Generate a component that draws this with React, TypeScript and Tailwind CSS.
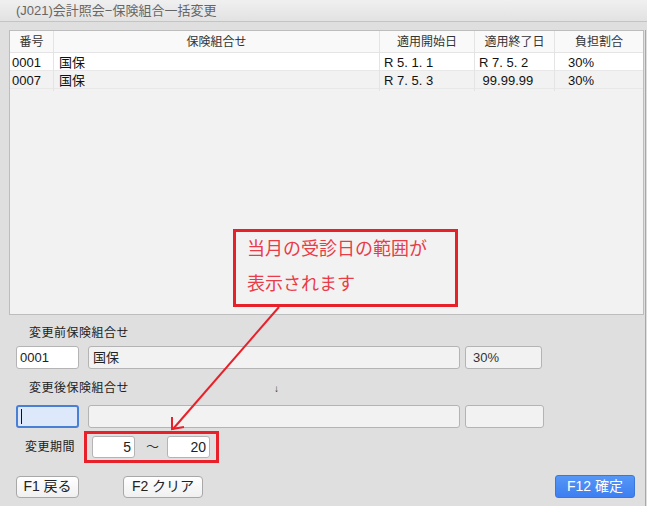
import React from "react";

const font = { fontFamily: '"Liberation Sans", "Noto Sans CJK JP", sans-serif' };

export default function App() {
  const rows = [
    { no: "0001", name: "国保", start: "R 5. 1. 1", end: "R 7. 5. 2", rate: "30%", bg: "bg-white" },
    { no: "0007", name: "国保", start: "R 7. 5. 3", end: " 99.99.99", rate: "30%", bg: "bg-[#f2f2f2]" },
  ];

  return (
    <div
      className="relative w-[647px] h-[506px] bg-[#dfdfdf] overflow-hidden text-[#222]"
      style={font}
    >
      {/* Title bar */}
      <div className="h-[22px] bg-gradient-to-b from-[#f0f0f0] to-[#e2e2e2] border-b border-[#c4c4c4] flex items-center pl-[16px] text-[13px] text-[#666]">
        (J021)会計照会−保険組合一括変更
      </div>

      <div className="border-r border-[#a8a8a8] h-[484px] w-[646px]">
        {/* Table */}
        <div className="ml-[9px] mt-[8px] w-[635px] h-[285px] bg-[#f2f2f2] border border-[#bdbdbd]">
          <div className="grid grid-cols-[44px_326px_95px_80px_1fr] h-[22px] bg-[#f9f9f9] border-b border-[#e4e4e4] text-[12px] text-[#333]">
            <div className="flex items-center justify-center border-r border-[#e4e4e4]">番号</div>
            <div className="flex items-center justify-center border-r border-[#e4e4e4]">保険組合せ</div>
            <div className="flex items-center justify-center border-r border-[#e4e4e4]">適用開始日</div>
            <div className="flex items-center justify-center border-r border-[#e4e4e4]">適用終了日</div>
            <div className="flex items-center justify-center">負担割合</div>
          </div>
          {rows.map((r) => (
            <div
              key={r.no}
              className={`grid grid-cols-[44px_326px_95px_80px_1fr] h-[18px] border-b border-[#e8e8e8] text-[13px] text-[#111] ${r.bg}`}
            >
              <div className="flex items-center pl-[2px] border-r border-[#e4e4e4]">{r.no}</div>
              <div className="flex items-center pl-[5px] border-r border-[#e4e4e4]">{r.name}</div>
              <div className="flex items-center pl-[4px] border-r border-[#e4e4e4]">{r.start}</div>
              <div className="flex items-center pl-[4px] border-r border-[#e4e4e4] whitespace-pre">{r.end}</div>
              <div className="flex items-center pl-[13px]">{r.rate}</div>
            </div>
          ))}
        </div>

        {/* Before */}
        <div className="mt-[10px] pl-[29px] h-[16px] flex items-center text-[12px] tracking-[0.5px] text-[#222]">
          変更前保険組合せ
        </div>
        <div className="mt-[5px] flex items-center h-[23px] text-[13px]">
          <div className="ml-[16px] w-[63px] h-[23px] bg-white border border-[#b4b4b4] rounded-[3px] flex items-center pl-[3px]">
            0001
          </div>
          <div className="ml-[9px] w-[372px] h-[23px] bg-[#f2f2f2] border border-[#b4b4b4] rounded-[3px] flex items-center pl-[4px]">
            国保
          </div>
          <div className="ml-[5px] w-[77px] h-[23px] bg-[#f2f2f2] border border-[#b4b4b4] rounded-[3px] flex items-center pl-[7px] text-[#333]">
            30%
          </div>
        </div>

        {/* After */}
        <div className="mt-[11px] h-[16px] flex items-center text-[12px] text-[#222]">
          <span className="pl-[29px] tracking-[0.5px]">変更後保険組合せ</span>
          <span className="ml-[145px] text-[10px] text-[#333]">↓</span>
        </div>
        <div className="mt-[9px] flex items-center h-[23px] text-[13px]">
          <div className="ml-[16px] w-[63px] h-[23px] bg-[#dde9fa] border-2 border-[#4a7fd6] rounded-[3px] flex items-center pl-[3px]">
            <span className="w-[1px] h-[15px] bg-[#111]" />
          </div>
          <div className="ml-[9px] w-[372px] h-[23px] bg-[#f2f2f2] border border-[#b4b4b4] rounded-[3px]" />
          <div className="ml-[5px] w-[79px] h-[23px] bg-[#f2f2f2] border border-[#b4b4b4] rounded-[3px]" />
        </div>

        {/* Period */}
        <div className="mt-[3px] flex items-center h-[32px]">
          <span className="ml-[25px] w-[59px] text-[12px] tracking-[0.5px] text-[#222]">変更期間</span>
          <div className="w-[135px] h-[32px] border-[3px] border-[#e8202a] flex items-center pl-[5px]">
            <div className="w-[43px] h-[22px] bg-white border border-[#b4b4b4] rounded-[3px] flex items-center justify-end pr-[3px] text-[14px]">
              5
            </div>
            <span className="ml-[11px] w-[13px] text-[13px] text-[#333]">〜</span>
            <div className="ml-[8px] w-[43px] h-[22px] bg-white border border-[#b4b4b4] rounded-[3px] flex items-center justify-end pr-[3px] text-[14px]">
              20
            </div>
          </div>
        </div>

        {/* Buttons */}
        <div className="mt-[12px] flex items-center h-[23px]">
          <button className="ml-[16px] w-[63px] h-[22px] bg-gradient-to-b from-white to-[#f0f0f0] border border-[#a8a8a8] rounded-[4px] text-[14px] text-[#222] flex items-center justify-center">
            F1 戻る
          </button>
          <button className="ml-[44px] w-[80px] h-[22px] bg-gradient-to-b from-white to-[#f0f0f0] border border-[#a8a8a8] rounded-[4px] text-[14px] text-[#222] flex items-center justify-center">
            F2 クリア
          </button>
          <button className="ml-auto mr-[10px] w-[80px] h-[23px] bg-gradient-to-b from-[#5596f7] to-[#3d7ff0] border border-[#3a77dd] rounded-[3px] text-[14px] text-white flex items-center justify-center">
            F12 確定
          </button>
        </div>
      </div>

      {/* Callout */}
      <div className="absolute left-[233px] top-[229px] w-[225px] h-[78px] bg-[#f2f2f2] border-[3px] border-[#e8202a] pl-[11px] text-[18px] leading-[35px] text-[#ea3b48]">
        <div>当月の受診日の範囲が</div>
        <div>表示されます</div>
      </div>

      {/* Arrow */}
      <svg className="absolute left-0 top-0 pointer-events-none" width="647" height="506">
        <line x1="279" y1="307" x2="173" y2="429" stroke="#e8202a" strokeWidth="2" />
        <polyline points="172,417 172,429 184,427" fill="none" stroke="#e8202a" strokeWidth="2" />
      </svg>
    </div>
  );
}
